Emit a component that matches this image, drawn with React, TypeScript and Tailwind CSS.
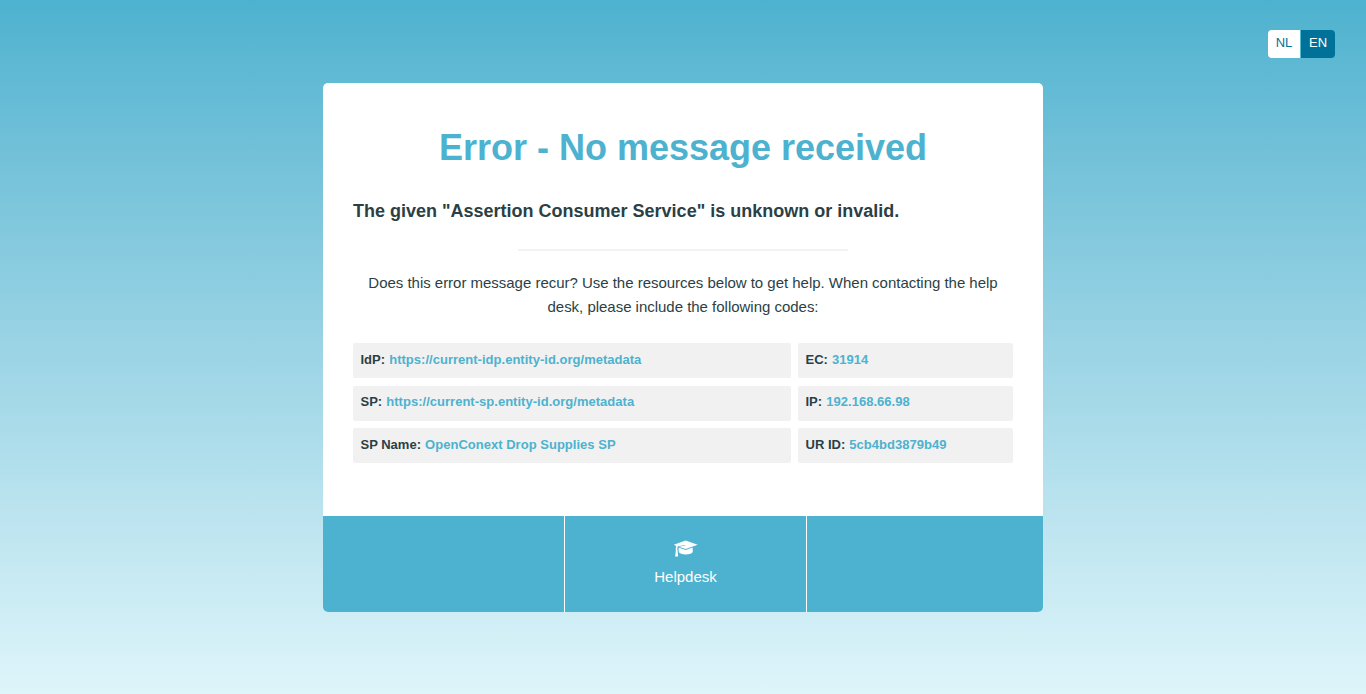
const rows = [
  ["IdP", "https://current-idp.entity-id.org/metadata", "EC", "31914"],
  ["SP", "https://current-sp.entity-id.org/metadata", "IP", "192.168.66.98"],
  ["SP Name", "OpenConext Drop Supplies SP", "UR ID", "5cb4bd3879b49"],
];

function Code({ label, value }: { label: string; value: string }) {
  return (
    <div className="h-[35px] rounded-[2px] bg-[#f1f1f1] px-[7.5px] text-[13px] leading-[33px] font-bold whitespace-nowrap group-even:leading-[31px]">
      {label}: <span className="ml-[0.5px] tracking-[0.02px] text-[#4db2cf]">{value}</span>
    </div>
  );
}

function GraduationCap() {
  return (
    <svg className="h-[17px] w-[25px]" viewBox="0 0 25 17" fill="currentColor" aria-hidden="true">
      <path d="M12.6.4 24.7 4.8 12.6 9 5.8 6.8 12.4 5.6 12.2 5 5 6.2Q4.3 7 4.3 8.6L4.6 11 5.1 16.6H2.2L2.8 11Q2.4 7.5 3.3 6L.7 4.8Z" />
      <path d="m5.6 7.5 7 2.4 7-2.4.2 4.4c-.7 1.5-3.4 2.5-7 2.5s-6.4-1-7-2.5Z" />
    </svg>
  );
}

export default function App() {
  return (
    <div className="flex h-[694px] flex-col items-center bg-linear-to-b from-[#4db2cf] to-[#def5fa] font-['Nimbus_Sans','Helvetica','Liberation_Sans',sans-serif] text-[#2b3f45]">
      <nav className="flex h-[83px] w-full justify-end pt-[30px] pr-[31px] text-[13px] leading-[26px]">
        <a className="h-7 w-8 rounded-l-[4px] bg-white text-center text-[#007299]">NL</a>
        <a className="ml-px h-7 w-[34px] rounded-r-[4px] bg-[#007299] text-center text-white">EN</a>
      </nav>
      <main className="flex h-[529px] w-[720px] flex-col overflow-hidden rounded-[5px] bg-white">
        <div className="h-[433px] px-[30px] pt-[42px]">
          <h1 className="text-center text-[36px] leading-[46px] font-bold text-[#4db2cf]">Error - No message received</h1>
          <h2 className="mt-[28px] text-[18px] leading-[24px] font-bold">The given "Assertion Consumer Service" is unknown or invalid.</h2>
          <div className="mx-auto mt-[26px] h-[2px] w-[330px] bg-[#f2f2f2]" />
          <p className="mt-5 text-center text-[15px] leading-6 tracking-[-0.02px]">
            Does this error message recur? Use the resources below to get help. When contacting the help desk, please include the following codes:
          </p>
          <div className="mt-6 flex flex-col gap-[7.5px]">
            {rows.map((r) => (
              <div key={r[0]} className="group grid grid-cols-[438px_215px] gap-[7px]">
                <Code label={r[0]} value={r[1]} />
                <Code label={r[2]} value={r[3]} />
              </div>
            ))}
          </div>
        </div>
        <footer className="grid h-24 grid-cols-[241px_243px_236px] bg-[#4db2cf] text-white">
          <div />
          <a className="flex flex-col items-center border-x border-white pt-6 text-[15px]">
            <GraduationCap />
            <span className="mt-2 leading-6">Helpdesk</span>
          </a>
          <div />
        </footer>
      </main>
    </div>
  );
}
